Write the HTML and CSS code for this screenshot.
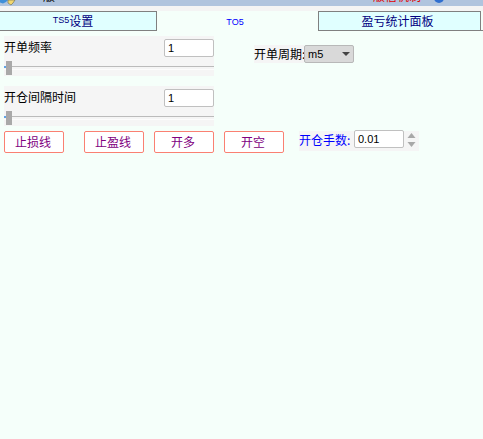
FILE: index.html
```html
<!DOCTYPE html>
<html lang="zh">
<head>
    <meta charset="UTF-8">
    <title>TO5</title>
    <link rel="stylesheet" href="styles.css">
</head>
<body>
    <div class="topbar">
        <svg class="app-icon" width="16" height="6" viewBox="0 0 16 6">
            <path d="M0 0h8l-2 2-3 1.500-3-1z" fill="#3f8fd8"/>
            <path d="M8 0h7l-2 3-2 2-3-2z" fill="#f2d870" stroke="#6a6a50" stroke-width="0.6"/>
        </svg>
        <span class="top-title">版</span>
        <span class="top-warn">版信机制</span>
        <span class="top-caret">▪</span>
        <span class="top-dot"></span>
    </div>
    <div class="top-gap"></div>
    <div class="tabs">
        <div class="tab tab-first"><span class="latin">TS5</span>设置</div>
        <div class="tab tab-active"><span class="latin">TO5</span></div>
        <div class="tab tab-last">盈亏统计面板</div>
        <div class="tab-rest"></div>
    </div>
    <div class="panel">
        <div class="row-top">
            <div class="sliders">
                <div class="slider-box">
                    <div class="slider-head">
                        <span>开单频率</span>
                        <input class="num" type="text" value="1">
                    </div>
                    <div class="track"><span class="fill"></span><span class="thumb"></span></div>
                </div>
                <div class="slider-box">
                    <div class="slider-head">
                        <span>开仓间隔时间</span>
                        <input class="num" type="text" value="1">
                    </div>
                    <div class="track"><span class="fill"></span><span class="thumb"></span></div>
                </div>
            </div>
            <div class="period">
                <span class="period-label">开单周期:</span>
                <div class="select">m5<span class="arrow"></span></div>
            </div>
        </div>
        <div class="actions">
            <button class="btn btn-first">止损线</button>
            <button class="btn">止盈线</button>
            <button class="btn">开多</button>
            <button class="btn">开空</button>
            <div class="lots">
                <span class="lots-label">开仓手数:</span>
                <input class="num lot-input" type="text" value="0.01">
                <div class="spin">
                    <svg width="9" height="14" viewBox="0 0 9 14">
                        <path d="M4.500 0l4 5H.5z" fill="#a8a8a8"/>
                        <path d="M.5 9h8l-4 5z" fill="#a8a8a8"/>
                    </svg>
                </div>
            </div>
        </div>
    </div>
</body>
</html>
```

FILE: styles.css
```css
* {
    box-sizing: border-box;
}
html, body {
    height: 100%;
}
body {
    margin: 0;
    background-color: #f5fffa;
    font-family: "Noto Sans CJK SC", "Liberation Sans", sans-serif;
    font-size: 12px;
    color: #000;
    overflow: hidden;
}
.topbar {
    position: relative;
    height: 6px;
    background-color: #b0c4de;
    overflow: hidden;
}
.top-gap {
    height: 5px;
    background-color: #f4f4f4;
}
.app-icon {
    position: absolute;
    left: 0;
    top: 0;
}
.top-title {
    position: absolute;
    left: 43px;
    top: -13px;
    line-height: 17px;
}
.top-warn {
    position: absolute;
    left: 373px;
    top: -13px;
    line-height: 17px;
    color: #e00000;
}
.top-caret {
    position: absolute;
    left: 421px;
    top: -11px;
    font-size: 10px;
    line-height: 14px;
    color: #e00000;
}
.top-dot {
    position: absolute;
    left: 434px;
    top: -7px;
    width: 10px;
    height: 10px;
    border-radius: 50%;
    background-color: #2f6fd0;
}
.tabs {
    display: flex;
    height: 20px;
}
.tab {
    display: flex;
    align-items: center;
    justify-content: center;
    padding-bottom: 2px;
    background-color: #e0ffff;
    border-top: 1px solid #808080;
    border-bottom: 1px solid #808080;
    color: #000080;
}
.latin {
    font-family: "Liberation Sans", sans-serif;
    font-size: 9px;
}
.tab-first {
    width: 157px;
    padding-right: 10px;
    border-right: 1px solid #808080;
}
.tab-active {
    width: 161px;
    padding: 1px 5px 0 0;
    background-color: #f5fffa;
    border: 0;
    color: #0000ff;
}
.tab-last {
    width: 163px;
    padding-right: 4px;
    border-left: 1px solid #808080;
    border-right: 1px solid #808080;
}
.tab-rest {
    flex: 1;
    border-bottom: 1px solid #808080;
}
.panel {
    padding: 5px 0 0 4px;
}
.row-top {
    display: flex;
}
.sliders {
    display: flex;
    flex-direction: column;
    gap: 10px;
    width: 210px;
}
.slider-box {
    height: 40px;
    background-color: #f5f5f5;
}
.slider-head {
    display: flex;
    justify-content: space-between;
    height: 25px;
    padding-top: 3px;
    line-height: 16px;
}
.num {
    width: 50px;
    height: 18px;
    padding: 0 3px;
    margin: 0;
    border: 1px solid #c0c0c0;
    border-radius: 2px;
    background-color: #fff;
    font-family: "Liberation Sans", sans-serif;
    font-size: 11px;
}
.track {
    position: relative;
    height: 15px;
}
.track::before {
    content: "";
    position: absolute;
    left: 0;
    right: 0;
    top: 5px;
    height: 1px;
    background-color: #bbb;
}
.track::after {
    content: "";
    position: absolute;
    left: 0;
    right: 0;
    top: 8px;
    height: 1px;
    background-color: #fcfcfc;
}
.fill {
    position: absolute;
    left: 0;
    top: 5px;
    width: 3px;
    height: 2px;
    background-color: #5ea5e8;
}
.thumb {
    position: absolute;
    z-index: 1;
    left: 2px;
    top: 0;
    width: 6px;
    height: 14px;
    background-color: #a9a9a9;
}
.period {
    display: flex;
    align-items: center;
    height: 18px;
    margin: 9px 0 0 40px;
}
.period-label {
    width: 50px;
    line-height: 18px;
    background-color: #f5f5f5;
    white-space: nowrap;
}
.select {
    position: relative;
    width: 50px;
    height: 18px;
    padding-left: 3px;
    line-height: 17px;
    background-color: #d9d9d9;
    border: 1px solid #b8b8b8;
    border-radius: 2px;
    font-family: "Liberation Sans", sans-serif;
    font-size: 11px;
}
.arrow {
    position: absolute;
    right: 3px;
    top: 6px;
    border-left: 4px solid transparent;
    border-right: 4px solid transparent;
    border-top: 4px solid #444;
}
.actions {
    display: flex;
    align-items: flex-start;
    margin-top: 5px;
}
.btn {
    width: 60px;
    height: 22px;
    margin: 0 10px 0 0;
    padding: 0 2px 2px 0;
    background-color: #fff;
    border: 1px solid #fa8072;
    border-radius: 2px;
    color: #800080;
    font-family: inherit;
    font-size: 12px;
}
.btn-first {
    margin-right: 20px;
}
.lots {
    display: flex;
    height: 20px;
    margin-left: 5px;
    background-color: #f5f5f5;
    color: #0000ff;
}
.lots-label {
    width: 55px;
    line-height: 18px;
    white-space: nowrap;
}
.lot-input {
    margin-top: -1px;
}
.spin {
    display: flex;
    align-items: flex-start;
    width: 15px;
    padding: 2px 0 0 3px;
}
```
